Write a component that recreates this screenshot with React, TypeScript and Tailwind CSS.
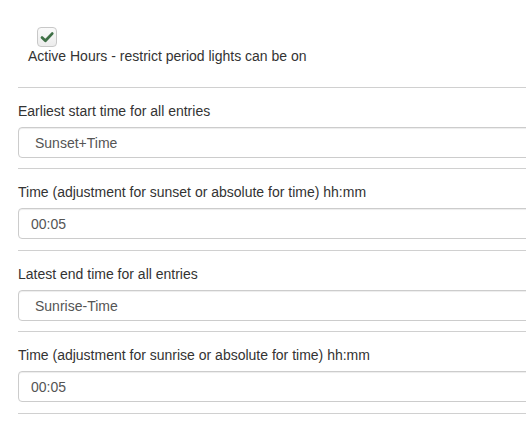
export default function App() {
  const blocks = [
    { label: "Earliest start time for all entries", value: "Sunset+Time", select: true },
    { label: "Time (adjustment for sunset or absolute for time) hh:mm", value: "00:05", select: false },
    { label: "Latest end time for all entries", value: "Sunrise-Time", select: true },
    { label: "Time (adjustment for sunrise or absolute for time) hh:mm", value: "00:05", select: false },
  ];

  return (
    <div
      className="w-[526px] h-[438px] overflow-hidden bg-white text-[14px] leading-[20px] text-[#333]"
      style={{ fontFamily: '"Liberation Sans", Arial, sans-serif' }}
    >
      <div className="w-[580px]">
        {/* Active hours checkbox */}
        <div className="pt-[27px] pl-[28px] h-[87px]">
          <div className="ml-[9px] w-[20px] h-[20px] rounded-[4px] border border-[#c8c8c8] bg-gradient-to-b from-[#fafafa] to-[#ececec] flex items-center justify-center">
            <svg width="16" height="16" viewBox="0 0 16 16">
              <path
                d="M3 8.6 L6.4 11.8 L13.2 4.6"
                fill="none"
                stroke="#3f7046"
                strokeWidth="2.8"
                strokeLinecap="round"
                strokeLinejoin="round"
              />
            </svg>
          </div>
          <p className="-mt-[1px]">Active Hours - restrict period lights can be on</p>
        </div>

        <div className="ml-[18px]">
          {blocks.map((b) => (
            <div
              key={b.label}
              className={`border-t border-[#d0d0d0] pt-[13px] ${b.select ? "pb-[10px]" : "pb-[11px]"}`}
            >
              <label className="block">{b.label}</label>
              <div
                className={`mt-[6px] h-[31px] rounded-[4px] border border-[#cccccc] shadow-[inset_0_1px_1px_rgba(0,0,0,0.075)] flex items-center text-[#555] ${
                  b.select ? "pl-[16px]" : "pl-[12px]"
                }`}
              >
                {b.value}
              </div>
            </div>
          ))}
          <div className="border-t border-[#d0d0d0]" />
        </div>
      </div>
    </div>
  );
}
